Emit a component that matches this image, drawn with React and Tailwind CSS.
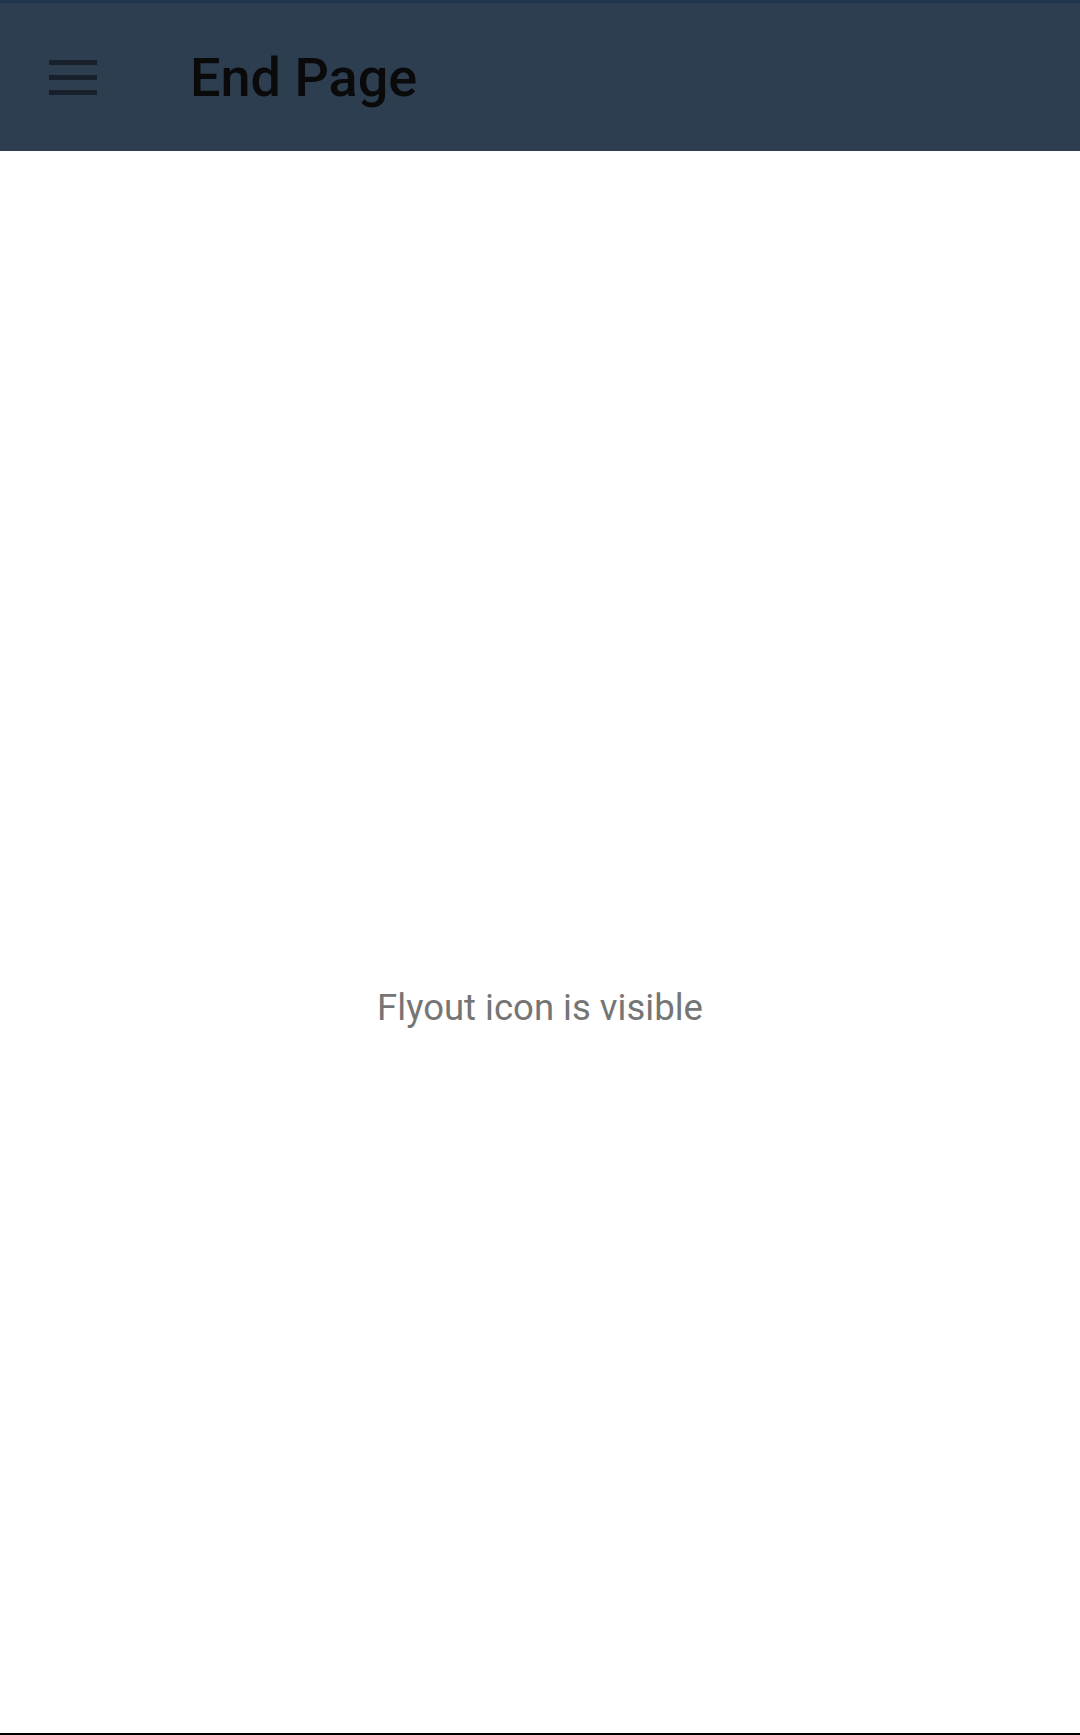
import React from 'react';

const EndPage = () => {
  return (
    <div className="h-[1735px] w-[1080px] flex flex-col bg-white" style={{ fontFamily: 'Roboto, "Noto Sans", sans-serif' }}>
      <div className="h-[3px] bg-[#1f354d]" />
      <header className="h-[148px] bg-[#2e3e51] flex items-center">
        <button className="ml-[49px] w-[48px] flex flex-col gap-[10px]">
          <span className="block h-[5px] w-[48px] bg-[#17202b]" />
          <span className="block h-[5px] w-[48px] bg-[#17202b]" />
          <span className="block h-[5px] w-[48px] bg-[#17202b]" />
        </button>
        <h1 className="ml-[93px] mt-[2px] text-[54px] font-medium text-[#0a0a0a] leading-none">End Page</h1>
      </header>
      <main className="flex-1 flex flex-col items-center pt-[839px]">
        <p className="text-[36.5px] text-[#757575] leading-none">Flyout icon is visible</p>
      </main>
      <div className="h-[2px] bg-black" />
    </div>
  );
};

export default EndPage;
